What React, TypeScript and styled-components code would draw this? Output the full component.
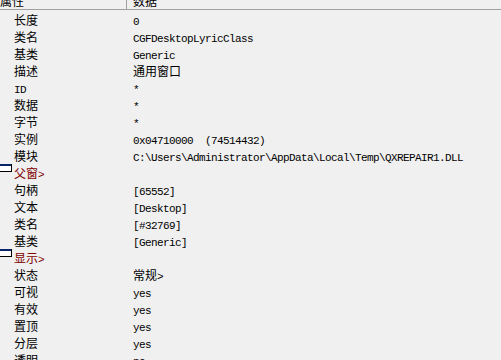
import React from "react";
import styled, { createGlobalStyle } from "styled-components";

type Row =
  | { kind: "prop"; label: string; value?: string }
  | { kind: "group"; label: string };

const rows: Row[] = [
  { kind: "prop", label: "长度", value: "0" },
  { kind: "prop", label: "类名", value: "CGFDesktopLyricClass" },
  { kind: "prop", label: "基类", value: "Generic" },
  { kind: "prop", label: "描述", value: "通用窗口" },
  { kind: "prop", label: "ID", value: "*" },
  { kind: "prop", label: "数据", value: "*" },
  { kind: "prop", label: "字节", value: "*" },
  { kind: "prop", label: "实例", value: "0x04710000  (74514432)" },
  {
    kind: "prop",
    label: "模块",
    value: "C:\\Users\\Administrator\\AppData\\Local\\Temp\\QXREPAIR1.DLL",
  },
  { kind: "group", label: "父窗>" },
  { kind: "prop", label: "句柄", value: "[65552]" },
  { kind: "prop", label: "文本", value: "[Desktop]" },
  { kind: "prop", label: "类名", value: "[#32769]" },
  { kind: "prop", label: "基类", value: "[Generic]" },
  { kind: "group", label: "显示>" },
  { kind: "prop", label: "状态", value: "常规>" },
  { kind: "prop", label: "可视", value: "yes" },
  { kind: "prop", label: "有效", value: "yes" },
  { kind: "prop", label: "置顶", value: "yes" },
  { kind: "prop", label: "分层", value: "yes" },
  { kind: "prop", label: "透明", value: "no" },
];

// ascii runs go in the narrow mono face, the rest in the CJK face
const Mixed: React.FC<{ text: string }> = ({ text }) => {
  const parts = text.match(/[\x00-\x7f]+|[^\x00-\x7f]+/g) || [];
  return (
    <>
      {parts.map((p, i) =>
        /^[\x00-\x7f]/.test(p) ? <Mono key={i}>{p}</Mono> : <Cjk key={i}>{p}</Cjk>
      )}
    </>
  );
};

const GroupIcon: React.FC = () => (
  <IconSvg width="13" height="8" viewBox="0 0 13 8">
    <rect x="0" y="0" width="13" height="8" fill="#000" />
    <rect x="1" y="0" width="11" height="2" fill="#0a246a" />
    <rect x="1" y="2" width="11" height="5" fill="#fff" />
  </IconSvg>
);

const App: React.FC = () => {
  return (
    <>
      <GlobalStyle />
      <List>
        <Header>
          <HeadCell>
            <Mixed text="属性" />
          </HeadCell>
          <HeadCell $last>
            <Mixed text="数据" />
          </HeadCell>
        </Header>
        <Body>
          {rows.map((r, i) =>
            r.kind === "group" ? (
              <GroupRow key={i}>
                <GroupIcon />
                <Cell>
                  <Mixed text={r.label} />
                </Cell>
              </GroupRow>
            ) : (
              <PropRow key={i}>
                <Cell $indent>
                  <Mixed text={r.label} />
                </Cell>
                <Cell>
                  <Mixed text={r.value || ""} />
                </Cell>
              </PropRow>
            )
          )}
        </Body>
      </List>
    </>
  );
};

const GlobalStyle = createGlobalStyle`
  html, body {
    margin: 0;
    padding: 0;
    background: #f0f0f0;
    overflow: hidden;
  }
  body {
    width: 501px;
    height: 360px;
    font-family: "Noto Sans CJK SC", sans-serif;
    font-size: 12px;
    color: #000;
  }
`;

const List = styled.div`
  width: 501px;
  height: 360px;
  overflow: hidden;
  background: #f0f0f0;
`;

const Header = styled.div`
  display: grid;
  grid-template-columns: 127px 1fr;
  height: 17px;
  margin-top: -8px;
  border-bottom: 1px solid #a0a0a0;
`;

const HeadCell = styled.div<{ $last?: boolean }>`
  height: 17px;
  line-height: 17px;
  padding-left: ${(p) => (p.$last ? "6px" : "0")};
  border-right: ${(p) => (p.$last ? "none" : "1px solid #a0a0a0")};
  white-space: nowrap;
`;

const Body = styled.div`
  padding-top: 1px;
`;

const PropRow = styled.div`
  display: grid;
  grid-template-columns: 133px 1fr;
  height: 17px;
  white-space: nowrap;
`;

const GroupRow = styled.div`
  position: relative;
  height: 17px;
  padding-left: 14px;
  color: #800000;
  white-space: nowrap;
`;

const Cell = styled.div<{ $indent?: boolean }>`
  height: 17px;
  line-height: 17px;
  padding-left: ${(p) => (p.$indent ? "14px" : "0")};
  overflow: hidden;
`;

const IconSvg = styled.svg`
  position: absolute;
  left: -1px;
  top: 0;
  display: block;
`;

const Mono = styled.span`
  font-family: "Liberation Mono", monospace;
  font-size: 11px;
  line-height: 17px;
  letter-spacing: -0.6px;
  white-space: pre;
`;

const Cjk = styled.span`
  font-family: "Noto Sans CJK SC", sans-serif;
  font-size: 12px;
  line-height: 17px;
`;

export default App;
